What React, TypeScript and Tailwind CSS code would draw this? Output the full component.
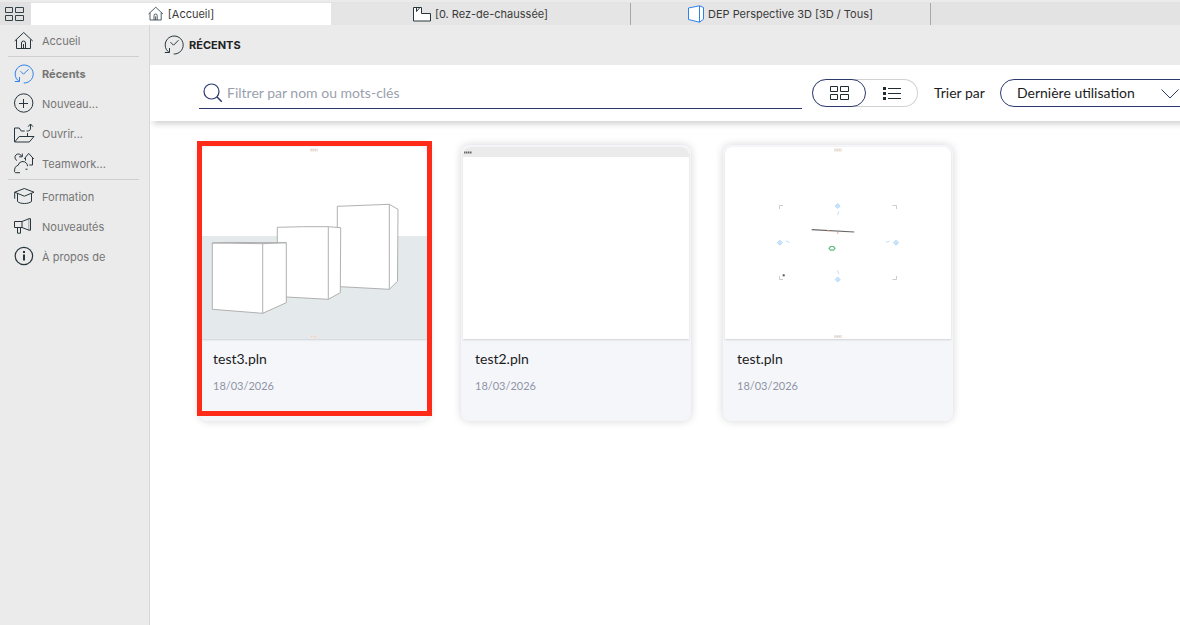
import { useState, type ReactNode } from 'react'

type IconProps = { className?: string }

function Icon({ className = '', children }: { className?: string; children: ReactNode }) {
  return (
    <svg viewBox="0 0 20 20" fill="none" stroke="currentColor" strokeWidth="1" aria-hidden="true"
      className={`shrink-0 overflow-visible ${className}`}>
      {children}
    </svg>
  )
}

const HomeIcon = ({ className = 'size-5' }: IconProps) => (
  <Icon className={className}>
    <path d="M.7 10 9.700 1.500 18.700 10M2.500 8.500v9h14v-9M7.500 17.500V12a2 2 0 0 1 4 0v5.500M9.500 13v4.500" />
  </Icon>
)
const RecentIcon = ({ className = 'size-5' }: IconProps) => (
  <Icon className={className}>
    <path d="M5.200 17.500A9 9 0 1 1 9.700 19M5.500 13v4.500H.8M6.500 7.200l3 3 5-5" />
  </Icon>
)
const NewIcon = () => (
  <Icon className="size-5"><circle cx="9.700" cy="9" r="9.200" /><path d="M9.500 5v9M5 9.500h9" /></Icon>
)
const OpenIcon = () => (
  <Icon className="size-5">
    <path d="M.5 18V4h4.700l2 3h3.500M13.500 9v3.500M.7 18l4.500-5.500H20L15.300 18zM12.500 7h1c2.200 0 3-1 3-3V.2M14 2.700 16.500 0 19 2.700" />
  </Icon>
)
const TeamIcon = () => (
  <Icon className="size-5">
    <path d="M3 6.500A3.400 3.400 0 1 1 7.600 2.400M8.300-.4v3.200H5M10.300 4.800l4.400-5.400L19.800 5M11.500 4v2.600M18.500 4v7h-3.200" />
    <path d="M4.200 11.200a4.700 4.700 0 0 1 8.600-1.500c.5.7.8 1.600.7 2.500M4.200 11.200C1.500 12 .5 14 .5 17.500c0 .8.800 1.200 1.600 1.200H6M11.500 15.200h2" />
  </Icon>
)
const TrainingIcon = () => (
  <Icon className="size-5">
    <path d="M.7 5.200 10.300 1.500 20 5.200 10.300 9.200zM.7 5.200v6.500M3.500 6.500v8c1.500 1.400 4 2 6.800 2s5.400-.6 7.200-2v-8" />
  </Icon>
)
const NewsIcon = () => (
  <Icon className="size-5">
    <path d="M.5 4.500H8v6H.5zM8 4.500l7-2.800h1.500v11.500H15l-7-2.700M3.500 10.500v5.700h3v-5.700" />
    <path d="M14.800 1.700v11.500" opacity=".4" />
  </Icon>
)
const InfoIcon = () => (
  <Icon className="size-5">
    <circle cx="9.900" cy="9" r="8.700" strokeWidth="1.200" />
    <path d="M10 7.500v6M10 4v2" strokeWidth="2" />
  </Icon>
)
const SearchIcon = () => (
  <Icon className="size-5"><circle cx="8.500" cy="8.500" r="7.500" strokeWidth="1.200" /><path d="m13.800 13.800 5 5" strokeWidth="1.500" /></Icon>
)

const FloorIcon = () => (
  <svg viewBox="0 0 18 16" fill="white" stroke="#26363c" aria-hidden="true" className="h-4 w-[18px] shrink-0">
    <path d="M.5 1.500h8v6h9v7.500H.5z" />
    <path d="M3.500 1.500v4l3-3.500" fill="none" />
  </svg>
)
const CubeIcon = () => (
  <svg viewBox="0 0 16 18" fill="white" stroke="#2f80ed" strokeLinejoin="round" aria-hidden="true" className="h-[18px] w-4 shrink-0">
    <path d="M.5 3 11.500.8l4 1.700v11.700l-4 3L.5 14.500zM11.500.8v16.400" />
  </svg>
)
const GridIcon = () => (
  <svg viewBox="0 0 19 14" fill="none" stroke="currentColor" aria-hidden="true" className="h-3.5 w-[19px]">
    <path d="M.5.5h7v5h-7zM10.500.5h8v5h-8zM.5 8.500h7v5h-7zM10.500 8.500h8v5h-8z" />
  </svg>
)
const ListIcon = () => (
  <svg viewBox="0 0 18 14" fill="none" stroke="#1f2d33" aria-hidden="true" className="h-3.5 w-[18px]">
    <path d="M5 2.500h13M5 7.500h13M5 12.500h13" />
    <path d="M0 2.500h3M0 7.500h3M0 12.500h3" strokeWidth="3" />
  </svg>
)

const NAV: { label: string; icon: ReactNode }[][] = [
  [{ label: 'Accueil', icon: <HomeIcon /> }],
  [
    { label: 'Récents', icon: <RecentIcon className="size-5 text-[#2f80ed]" /> },
    { label: 'Nouveau...', icon: <NewIcon /> },
    { label: 'Ouvrir...', icon: <OpenIcon /> },
    { label: 'Teamwork...', icon: <TeamIcon /> },
  ],
  [
    { label: 'Formation', icon: <TrainingIcon /> },
    { label: 'Nouveautés', icon: <NewsIcon /> },
    { label: 'À propos de', icon: <InfoIcon /> },
  ],
]

const TABS = [
  { label: '[Accueil]', icon: <HomeIcon className="size-4 text-[#26363c]" /> },
  { label: '[0. Rez-de-chaussée]', icon: <FloorIcon /> },
  { label: 'DEP Perspective 3D [3D / Tous]', icon: <CubeIcon /> },
]

// small handles at the top and bottom of a view
const Handles = () => (
  <g stroke="#eee6e0">
    <path d="M109 3h8M109 189.500h8" strokeWidth="3" />
    <path d="M110 3h6M110 189.500h6" stroke="#ddcfc5" strokeDasharray="1 1" />
  </g>
)

function BoxesPreview() {
  return (
    <svg viewBox="0 0 226 192" className="block w-full" aria-hidden="true">
      <path fill="#fff" d="M0 0h226v192H0z" />
      <path fill="#e4e9eb" d="M0 89h226v103H0z" />
      <g fill="#fff" stroke="#a8a8a8" strokeWidth=".9" strokeLinejoin="round">
        <path d="m136.300 59.300 52-2 8.700 5-.5 72-8.200 8-52-2.800zM188.300 57.300v85" />
        <path d="m76.300 80.300 26-.6h25l12.400 1-.4 65-12 6.600-51-2.800zM127.300 79.700v72.600" />
        <path d="m11.300 96 17-.6 57 .3v60l-23.600 10.600-50.400-4zM61.700 96.700v69.600M11.300 96l50.400.7 23.600-1" />
      </g>
      <Handles />
    </svg>
  )
}

function LayoutPreview() {
  return (
    <svg viewBox="0 0 226 192" className="block w-full" aria-hidden="true">
      <path fill="#fff" d="M0 0h226v192H0z" />
      <path fill="#ebebeb" d="M0 0h226v10H0z" />
      <path stroke="#666" strokeWidth="2" strokeDasharray="1.500 .5" d="M1 5.500h8" />
    </svg>
  )
}

function PlanPreview() {
  return (
    <svg viewBox="0 0 226 192" className="block w-full" fill="none" aria-hidden="true">
      <path fill="#fff" d="M0 0h226v192H0z" />
      <path stroke="#ccc" d="M54.500 62v-3.500H58M167.500 58.500h4V62M54.500 129v3.500H58M167.500 132.500h4V129" />
      <g fill="#c9e4fb" stroke="#a9d2f7" strokeWidth=".8">
        <path d="m112.700 56.500 2.500 2.500-2.500 2.500-2.500-2.500zM112.700 130l2.500 2.500-2.500 2.500-2.500-2.500zM54.800 93.200l2.500 2.500-2.500 2.500-2.500-2.500zM171 93.200l2.500 2.500-2.500 2.500-2.500-2.500z" />
      </g>
      <path stroke="#bfdcf8" d="m112.500 68 1.500-3.500M112.500 123.500l1.500 3.500M61 94l3.500 1.500M161 95.500l3.500-1.500" />
      <path stroke="#666" strokeWidth="1.200" d="m86.700 82.700 42.600 2.300" />
      <path stroke="#e38b62" strokeWidth="1.200" d="M102.500 83.600h2M112 86h1.500" />
      <path stroke="#5fc083" strokeWidth="1.200" d="m104 101.300 1.500-1.800h3l1.500 1.800-1.500 1.800h-3z" />
      <path stroke="#555" strokeWidth="2" d="M57.700 128.300h2" />
      <Handles />
    </svg>
  )
}

const FILES = [
  { name: 'test3.pln', date: '18/03/2026', preview: <BoxesPreview /> },
  { name: 'test2.pln', date: '18/03/2026', preview: <LayoutPreview /> },
  { name: 'test.pln', date: '18/03/2026', preview: <PlanPreview /> },
]

export default function App() {
  const [active, setActive] = useState('Récents')
  const [tab, setTab] = useState(0)
  const [view, setView] = useState('grid')
  const [selected, setSelected] = useState('test3.pln')
  const [query, setQuery] = useState('')

  return (
    <div className="flex min-h-screen flex-col bg-white font-['Inter',sans-serif] text-[11px]">
      <header className="flex h-[25px] border-t-2 border-[#ebebeb] bg-[#e3e3e3]">
        <button aria-label="Onglets" className="flex w-[31px] shrink-0 items-center bg-[#e1e1e1] pl-[5px] text-[#344248]">
          <GridIcon />
        </button>
        {TABS.map((t, i) => (
          <button key={t.label} onClick={() => setTab(i)}
            className={`mt-px flex w-[300px] items-center justify-center gap-1 text-[#3a3a3a] ${
              tab === i ? 'bg-white' : 'border-r border-[#a8a8a8] bg-[#e5e5e5]'
            }`}>
            {t.icon}
            <span>{t.label}</span>
          </button>
        ))}
      </header>

      <div className="flex flex-1">
        <nav className="w-[150px] shrink-0 border-r border-[#d6d6d6] bg-[#ebebeb] pr-2.5 pl-2">
          {NAV.map((group, i) => (
            <div key={i} className={i > 0 ? 'border-t border-[#cfcfcf] pt-0.5' : 'pt-px'}>
              {group.map(item => (
                <button key={item.label} onClick={() => setActive(item.label)}
                  className={`flex h-[30px] w-full items-center gap-2 pl-1.5 text-left ${active === item.label ? 'font-bold' : ''}`}>
                  <span className="text-[#26363c]">{item.icon}</span>
                  <span className="text-[#757575]">{item.label}</span>
                </button>
              ))}
            </div>
          ))}
        </nav>

        <main className="min-w-0 flex-1 overflow-hidden">
          <div className="flex h-10 items-center gap-[5px] bg-[#ebebeb] pl-3.5">
            <RecentIcon className="size-5 text-[#26363c]" />
            <h1 className="font-bold text-[#222]">RÉCENTS</h1>
          </div>

          <div className="-mr-5 flex h-14 items-center pl-[49px] font-['Lato',sans-serif] text-sm text-[#1c1c1c] shadow-[0_6px_6px_-3px_rgba(0,0,0,0.18)]">
            <label className="flex h-8 min-w-0 flex-1 items-center gap-1 border-b border-[#2d3a6e] pl-1 text-[#2d3a6e]">
              <SearchIcon />
              <input type="text" aria-label="Filtrer" placeholder="Filtrer par nom ou mots-clés" value={query}
                onChange={e => setQuery(e.target.value)}
                className="min-w-0 flex-1 bg-transparent outline-none placeholder:text-[#9a9fae]" />
            </label>
            <div className="ml-2.5 flex h-7 w-[106px] shrink-0 rounded-full bg-white shadow-[inset_0_0_0_1px_#d2d2d2]">
              {['grid', 'list'].map(v => (
                <button key={v} aria-label={v === 'grid' ? 'Grille' : 'Liste'} onClick={() => setView(v)}
                  className={`flex h-7 flex-1 items-center justify-center rounded-full text-[#1f2d33] ${
                    view === v ? 'border border-[#2d3a6e] bg-white' : ''
                  }`}>
                  {v === 'grid' ? <GridIcon /> : <ListIcon />}
                </button>
              ))}
            </div>
            <label htmlFor="sort" className="ml-4 w-[50px] shrink-0 whitespace-nowrap">Trier par</label>
            <div className="relative ml-4 w-[200px] shrink-0">
              <select id="sort" className="block h-7 w-full appearance-none rounded-full border border-[#2d3a6e] bg-white pl-4 outline-none">
                <option>Dernière utilisation</option>
                <option>Nom</option>
              </select>
              <svg viewBox="0 0 18 10" fill="none" stroke="#2d3a6e" aria-hidden="true"
                className="pointer-events-none absolute top-2.5 right-[21px] h-2.5 w-[18px]">
                <path d="m.5.5 8.500 8.500L17.500.5" />
              </svg>
            </div>
          </div>

          <ul className="flex flex-wrap gap-8 pt-6 pl-[49px] font-['Lato',sans-serif]">
            {FILES.filter(f => f.name.includes(query)).map(f => (
              <li key={f.name} className="relative">
                <button onClick={() => setSelected(f.name)}
                  className="block w-[230px] rounded-lg bg-[#f5f6fa] p-0.5 text-left shadow-[0_0_8px_rgba(0,0,0,0.17)]">
                  <div className="overflow-hidden rounded-t-lg shadow-[0_1px_2px_rgba(0,0,0,0.15)]">{f.preview}</div>
                  <div className="px-3 pt-2.5 pb-[25px]">
                    <p className="text-sm leading-5 text-[#1c1c1c]">{f.name}</p>
                    <p className="mt-[9px] text-[11px] leading-4 text-[#8f94a5]">{f.date}</p>
                  </div>
                </button>
                {selected === f.name && (
                  <div className="pointer-events-none absolute -top-1 -right-[3px] -left-0.5 bottom-[5px] border-[5px] border-[#ff2a17]" />
                )}
              </li>
            ))}
          </ul>
        </main>
      </div>
    </div>
  )
}
